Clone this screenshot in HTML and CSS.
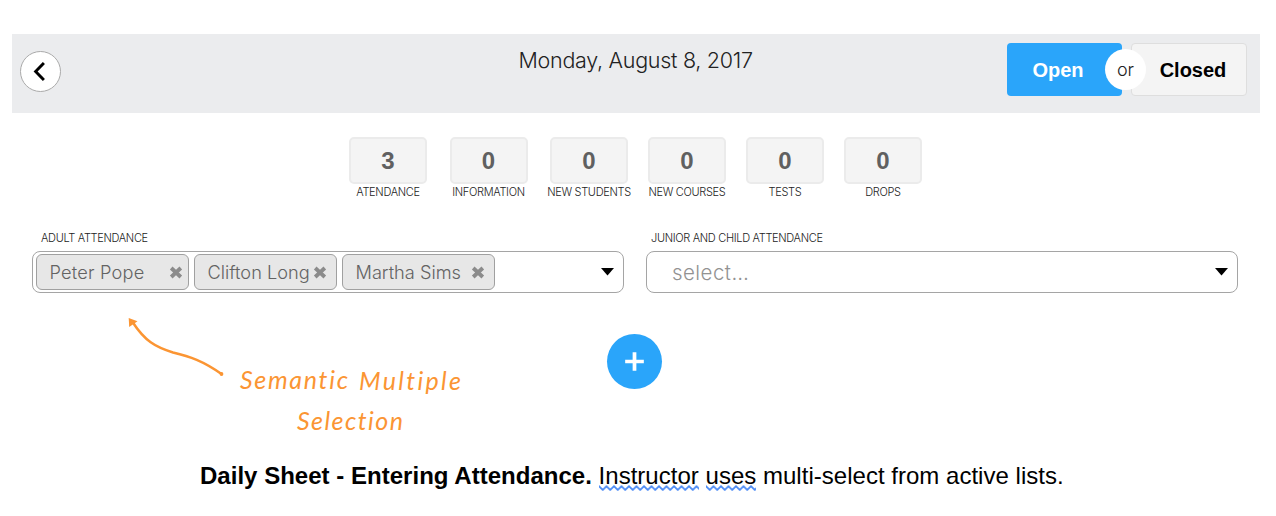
FILE: index.html
```html
<!DOCTYPE html>
<html lang="en">
<head>
<meta charset="utf-8">
<title>Daily Sheet</title>
<link rel="stylesheet" href="styles.css">
</head>
<body>
<header class="topbar">
  <button class="back" aria-label="Back"><svg width="39" height="39" viewBox="0 0 40 40"><path d="M23.500 11.200 15 20l8.500 8.800" fill="none" stroke="#000" stroke-width="3"/></svg></button>
  <h1 class="date">Monday, August 8, 2017</h1>
  <div class="toggle">
    <button class="choice open">Open</button>
    <span class="or">or</span>
    <button class="choice closed">Closed</button>
  </div>
</header>
<section class="stats">
  <div class="stat"><b class="count">3</b><span class="label">ATENDANCE</span></div>
  <div class="stat"><b class="count">0</b><span class="label">INFORMATION</span></div>
  <div class="stat"><b class="count">0</b><span class="label">NEW STUDENTS</span></div>
  <div class="stat"><b class="count">0</b><span class="label">NEW COURSES</span></div>
  <div class="stat"><b class="count">0</b><span class="label">TESTS</span></div>
  <div class="stat"><b class="count">0</b><span class="label">DROPS</span></div>
</section>
<section class="fields">
  <div class="field">
    <span class="label">ADULT ATTENDANCE</span>
    <div class="select">
      <span class="chip peter">Peter Pope<svg class="remove" viewBox="0 0 14 13"><path d="M2.2 2l9.6 9M11.8 2l-9.6 9"/></svg></span>
      <span class="chip clifton">Clifton Long<svg class="remove" viewBox="0 0 14 13"><path d="M2.2 2l9.6 9M11.8 2l-9.6 9"/></svg></span>
      <span class="chip martha">Martha Sims<svg class="remove" viewBox="0 0 14 13"><path d="M2.2 2l9.6 9M11.8 2l-9.6 9"/></svg></span>
      <svg class="caret" viewBox="0 0 13 8"><path d="M0 0h13L6.5 7.5z"/></svg>
    </div>
  </div>
  <div class="field">
    <span class="label">JUNIOR AND CHILD ATTENDANCE</span>
    <div class="select">
      <span class="placeholder">select…</span>
      <svg class="caret" viewBox="0 0 13 8"><path d="M0 0h13L6.5 7.5z"/></svg>
    </div>
  </div>
</section>
<section class="lower">
  <svg class="note" width="400" height="140" viewBox="110 305 400 140">
    <path d="M132.500 322C145 341 155 347 173 352.500C190 356.500 203 361 221.500 374" fill="none" stroke="#fb9533" stroke-width="2.500" stroke-linecap="round"/>
    <path d="M128.700 318l8.800 3.200-8.300 5.800z" fill="#fb9533"/>
    <circle cx="221.500" cy="374" r="1.900" fill="#fb9533"/>
    <text class="hand" x="240" y="389" textLength="108">Semantic</text>
    <text class="hand" x="359" y="390" textLength="102">Multiple</text>
    <text class="hand" x="297" y="430" textLength="106">Selection</text>
  </svg>
  <button class="add" aria-label="Add"><svg width="55" height="55" viewBox="0 0 56 56"><path d="M28 18.500v19M18.500 28h19" stroke="#fff" stroke-width="3.800"/></svg></button>
</section>
<p class="caption"><b>Daily Sheet - Entering Attendance.</b> <span class="flag">Instructor<svg class="wave" height="6" width="100%"><defs><pattern id="zig" width="7.500" height="6" patternUnits="userSpaceOnUse"><path d="M-1.500-1.500 3.750 3.750 9-1.500" transform="translate(0 1.200)" fill="none" stroke="#4c8bf5" stroke-width="1.700"/></pattern></defs><rect width="100%" height="6" fill="url(#zig)"/></svg></span> <span class="flag">uses<svg class="wave" height="6" width="100%"><rect width="100%" height="6" fill="url(#zig)"/></svg></span> multi-select from active lists.</p>
</body>
</html>
```
FILE: styles.css
```css
* { box-sizing: border-box; }
body {
  margin: 0;
  padding: 34px 16px 0 12px;
  height: 516px;
  background: #fff;
  overflow: hidden;
  font-family: Inter, "Liberation Sans", sans-serif;
  font-weight: 300;
}
button { padding: 0; border: 0; font-family: "Liberation Sans", sans-serif; }
svg { display: block; }
.topbar {
  display: grid;
  grid-template-columns: 1fr 234px 1fr;
  height: 79px;
  padding: 9px 13px 0 8px;
  background: #ebecee;
}
.back {
  width: 41px;
  height: 41px;
  margin-top: 8px;
  border: 1px solid #aaa;
  border-radius: 50%;
  background: #fff;
}
.date {
  margin: 3px 0 0 2px;
  font-size: 21.5px;
  line-height: 28px;
  font-weight: 300;
  letter-spacing: -.28px;
  color: #222;
  white-space: nowrap;
}
.toggle { display: flex; justify-content: flex-end; gap: 9px; position: relative; }
.choice {
  width: 115px;
  height: 53px;
  border-radius: 4px;
  padding-top: 2px;
  font-size: 20px;
  font-weight: 700;
}
.open { background: #2aa5fa; color: #fff; padding-right: 13px; }
.closed { background: #f4f4f4; border: 1px solid #dedede; color: #000; padding-left: 8px; width: 116px; }
.or {
  position: absolute;
  right: 101px;
  top: 6px;
  width: 41px;
  height: 41px;
  border-radius: 50%;
  background: #fff;
  font-size: 18px;
  line-height: 42px;
  text-align: center;
  color: #222;
}
.stats {
  display: grid;
  grid-template-columns: 100.500px 100.500px 98px 98px 98px 78px;
  margin: 24px 0 0 337px;
}
.stat { width: 78px; display: flex; flex-direction: column; align-items: center; }
.count {
  width: 78px;
  height: 47px;
  border: 2px solid #ebebeb;
  border-radius: 5px;
  background: #f4f4f4;
  color: #606060;
  font: 700 24px/44px "Liberation Sans", sans-serif;
  text-align: center;
}
.label {
  font-size: 11px;
  line-height: 14px;
  color: #222;
  letter-spacing: -.32px;
  white-space: nowrap;
}
.stat .label { margin-top: 1px; }
.fields { display: grid; grid-template-columns: 592px 592px; gap: 22px; margin: 32px 0 0 20px; }
.field .label { display: block; padding-left: 9px; }
.field:last-child .label { padding-left: 5px; }
.select {
  display: flex;
  align-items: center;
  gap: 5px;
  height: 42px;
  margin-top: 6px;
  padding: 0 9px 0 3px;
  border: 1px solid #a5a5a5;
  border-radius: 8px;
}
.chip {
  display: flex;
  align-items: center;
  justify-content: space-between;
  width: 153px;
  height: 36px;
  padding-left: 12.500px;
  border: 1px solid #a0a0a0;
  border-radius: 6px;
  background: #e7e7e7;
  color: #636363;
  font-size: 18.200px;
  line-height: 32px;
  padding-bottom: 1px;
  white-space: nowrap;
}
.peter { padding-right: 5px; letter-spacing: .2px; }
.clifton { width: 143px; padding-right: 9px; }
.martha { padding-right: 9px; }
.remove { width: 14px; height: 13px; margin-top: 1px; flex: none; fill: none; stroke: #8b8b8b; stroke-width: 3.800; }
.caret { width: 13px; height: 8px; margin-left: auto; }
.placeholder { padding-left: 22px; font-size: 20.500px; letter-spacing: .45px; color: #929292; }
.lower { display: flex; align-items: flex-start; gap: 97px; height: 140px; margin: 12px 0 0 98px; }
.hand {
  font: italic 400 25px Lato, sans-serif;
  font-variant-ligatures: none;
  fill: #fb9533;
}
.add { width: 55px; height: 55px; margin-top: 29px; border-radius: 50%; background: #2aa5fa; }
.caption {
  margin: 17px 0 0 188px;
  font: 400 24px/28px "Liberation Sans", Arial, sans-serif;
  letter-spacing: .02px;
  color: #000;
  white-space: nowrap;
}
.flag { position: relative; }
.wave { position: absolute; left: 0; bottom: -2px; }
```
